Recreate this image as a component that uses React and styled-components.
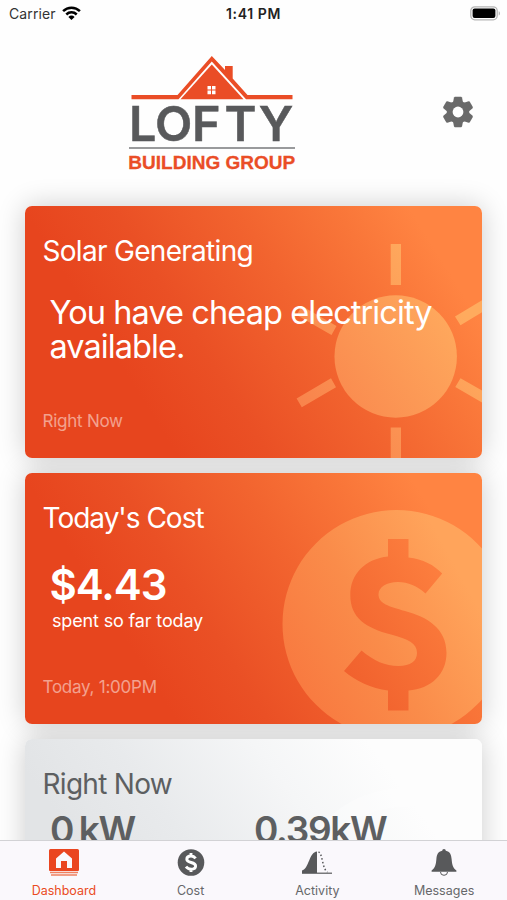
import React from 'react';
import styled, { createGlobalStyle } from 'styled-components';

const GlobalStyle = createGlobalStyle`
	* {
		box-sizing: border-box;
	}
	body {
		margin: 0;
		background: #fefefe;
		font-family: Inter, 'Liberation Sans', sans-serif;
	}
`;

const Screen = styled.div`
	width: 507px;
	height: 900px;
	overflow: hidden;
	display: flex;
	flex-direction: column;
`;

const StatusBar = styled.div`
	height: 28px;
	flex: none;
	display: grid;
	grid-template-columns: 1fr auto 1fr;
	align-items: center;
	padding: 0 6px 2px;
	color: #222;
`;

const Carrier = styled.div`
	display: flex;
	align-items: center;
	gap: 6px;
	padding-left: 3px;
	font-size: 14px;
	letter-spacing: 0.1px;
	color: #333;
`;

const Clock = styled.div`
	font-size: 14px;
	font-weight: 600;
	letter-spacing: 0.6px;
`;

const Battery = styled.div`
	justify-self: end;
	display: flex;
`;

const Header = styled.header`
	height: 178px;
	flex: none;
	display: flex;
	justify-content: space-between;
	padding: 26px 33px 0 125px;
`;

const SettingsButton = styled.button`
	width: 32px;
	height: 32px;
	margin-top: 42px;
	padding: 0;
	border: 0;
	background: none;
	display: flex;
`;

const CardList = styled.main`
	position: relative;
	z-index: 0;
	flex: 1;
	min-height: 0;
	display: flex;
	flex-direction: column;
	gap: 15px;
	padding: 0 25px;
`;

const Card = styled.section`
	position: relative;
	flex: none;
	height: 251.5px;
	border-radius: 7px;
	color: ${(props) => (props.$plain ? '#5d5f61' : '#fff')};

	&::before {
		content: '';
		position: absolute;
		inset: 0;
		z-index: -1;
		border-radius: 7px;
		box-shadow: 0 0 28px rgba(0, 0, 0, 0.2);
	}
`;

const CardBody = styled.div`
	position: relative;
	z-index: 0;
	height: 100%;
	padding: 28px 17px 0 17.5px;
	display: flex;
	flex-direction: column;
	border-radius: 7px;
	overflow: hidden;
	background: ${(props) =>
		props.$plain
			? 'linear-gradient(54deg, #e2e4e6 25%, #e8eaec 42%, #f5f6f7 64%, #fdfdfd 82%)'
			: 'linear-gradient(58deg, #e7451e 25%, #ea5025 40%, #f2642f 60%, #f97639 76%, #ff8442 88%)'};
`;

const CardArt = styled.svg`
	position: absolute;
	inset: 0;
	z-index: -1;
`;

const Title = styled.h2`
	margin: 0;
	font-size: 28px;
	line-height: 34px;
	font-weight: 400;
	letter-spacing: ${(props) => props.$tracking || '-0.7px'};
`;

const Message = styled.p`
	margin: 28px 0 0 7px;
	font-size: 32.5px;
	line-height: 34px;
	letter-spacing: -0.92px;
`;

const Amount = styled.p`
	margin: 27px 0 0 7px;
	font-size: 42px;
	line-height: 46px;
	font-weight: 600;
	letter-spacing: -1px;
`;

const Caption = styled.p`
	margin: 2px 0 0 9.5px;
	font-size: 18px;
	line-height: 22px;
	letter-spacing: -0.15px;
`;

const Stamp = styled.p`
	margin: auto 0 27px;
	font-size: 17px;
	line-height: 20px;
	letter-spacing: -0.25px;
	color: rgba(255, 255, 255, 0.5);
`;

const Readings = styled.div`
	display: grid;
	grid-template-columns: 204px auto;
	margin: 7px 0 0 7.5px;
	font-size: 37px;
	line-height: 44px;
	font-weight: 600;
	letter-spacing: -1.3px;
	word-spacing: -2.5px;
`;

const TabBar = styled.nav`
	position: relative;
	z-index: 1;
	flex: none;
	height: 60px;
	display: grid;
	grid-template-columns: repeat(4, 1fr);
	background: #faf8fc;
	border-top: 1px solid #d2d2d5;
`;

const Tab = styled.button`
	border: 0;
	padding: 7px 0 0 1px;
	background: none;
	display: flex;
	flex-direction: column;
	align-items: center;
	gap: 7px;
	font-family: inherit;
	font-size: 12.5px;
	line-height: 16px;
	letter-spacing: 0;
	color: ${(props) => (props.$active ? '#ea4b22' : '#66676a')};
`;

const WifiIcon = () => (
	<svg width="19" height="15" viewBox="0 0 19 15">
		<g fill="none" stroke="#000" strokeWidth="2.5">
			<path d="M1.1 5.2a12 12 0 0 1 16.8 0" />
			<path d="M4.3 8.5a7.4 7.4 0 0 1 10.4 0" />
		</g>
		<path d="M9.5 14 6.4 10.9a4.4 4.4 0 0 1 6.2 0z" />
	</svg>
);

const BatteryIcon = () => (
	<svg width="31" height="15" viewBox="0 0 31 15">
		<rect x="0.8" y="0.8" width="26.4" height="13" rx="4" fill="#fff" stroke="#b5b5b5" strokeWidth="1.3" />
		<rect x="2.6" y="2.6" width="22.8" height="9.4" rx="2" fill="#000" />
		<path d="M28.7 5.2v4.4c1.7-.6 1.7-3.8 0-4.4" fill="#b5b5b5" />
	</svg>
);

const Logo = () => (
	<svg width="175" height="120" viewBox="125 54 175 120">
		<g fill="#ea4d26">
			<path d="M131.5 95h46L211.8 56l13.2 14V66h7.7v12.5L247.5 95h45v4.2H246L211.8 61.5 178.5 99.2h-47z" />
			<path d="M211.8 64.5 243.5 99.2h-63z" />
		</g>
		<path d="M207.5 86h3.500v3.600h-3.500zM212 86h3.500v3.600H212zM207.500 90.600h3.500v3.600h-3.500zM212 90.600h3.500v3.600H212z" fill="#fff" />
		<text
			x="129 155 192 224.5 258.8"
			y="141.3"
			fontFamily="Inter"
			fontWeight="600"
			fontSize="48.5"
			fill="#58595b"
			stroke="#58595b"
			strokeWidth="0.5">
			LOFTY
		</text>
		<path d="M129 148h166" stroke="#77787b" strokeWidth="1.3" />
		<text x="128.3" y="169" fontFamily="Liberation Sans" fontWeight="700" fontSize="19" fill="#ea4d26" stroke="#ea4d26" strokeWidth="0.3" textLength="167">
			BUILDING GROUP
		</text>
	</svg>
);

const GearIcon = () => (
	<svg width="32" height="32" viewBox="-16 -16 32 32">
		<g fill="#6a6a6a">
			<circle r="11.2" />
			{[0, 60, 120].map((angle) => (
				<path
					key={angle}
					transform={`rotate(${angle})`}
					d="M-3.2-15.3h6.4l.8.7 1 5v19.2l-1 5-.8.7h-6.4l-.8-.7-1-5v-19.2l1-5z"
				/>
			))}
		</g>
		<circle r="5.4" fill="#fefefe" />
	</svg>
);

const SunArt = () => (
	<CardArt width="457" height="252" viewBox="0 0 457 252">
		<defs>
			<linearGradient id="sun" gradientUnits="userSpaceOnUse" x1="270" y1="220" x2="440" y2="110">
				<stop offset="0" stopColor="#f8804a" />
				<stop offset="1" stopColor="#ffab5e" />
			</linearGradient>
		</defs>
		<g fill="url(#sun)">
			<circle cx="370.7" cy="150.5" r="61.2" />
			<path d="M365.7 38H376v41h-10.300zM365.700 221.500H376V252h-10.300z" />
			<path d="M276.800 100 271.600 109 306.500 129 311.500 120zM271.600 192.500 276.800 201.200 311 181.300 306 172.200z" />
			<path d="M464.600 89.800 470 98.500 435.500 119.300 430 110.500zM430.300 181 435.500 172.200 470 192 465 201z" />
		</g>
	</CardArt>
);

const CoinArt = () => (
	<CardArt width="457" height="252" viewBox="0 0 457 252">
		<defs>
			<linearGradient id="coin" gradientUnits="userSpaceOnUse" x1="260" y1="210" x2="440" y2="110">
				<stop offset="0" stopColor="#f8783f" />
				<stop offset="0.5" stopColor="#fa8c4a" />
				<stop offset="1" stopColor="#ffa45b" />
			</linearGradient>
		</defs>
		<path
			fill="url(#coin)"
			fillRule="evenodd"
			d="M371.5 37a114 114 0 1 0 .01 0z
				M363 66h20.5v18.5C398 86 409 92 417.2 100.5L400.5 120.5C392 113 383 109 373 109 361.5 109 353.5 114 353.5 121.5 353.5 130.5 364 133.5 380 138 402 144 421.5 155 421.5 180 421.5 201 406 216 383.5 217.5V237.5H363V217.5C346 215.5 331 208 319 198L336.5 177.5C349 188 360 193 373.5 193 385.5 193 392 188 392 180 392 170 383 166 366 161.5 341 155 325.3 145 325.3 122 325.3 101 340 86 363 83.5z"
		/>
	</CardArt>
);

const GaugeArt = () => (
	<CardArt width="457" height="252" viewBox="0 0 457 252">
		<path d="M283 110C297 75 330 55 364 50L394 47V68C350 66 318 80 304 110z" fill="#fff" opacity="0.3" />
	</CardArt>
);

const DashboardIcon = () => (
	<svg width="32" height="28" viewBox="0 0 32 28">
		<path
			fill="#ea4520"
			fillRule="evenodd"
			d="M2.5 1h27A1.5 1.5 0 0 1 31 2.5V22a1 1 0 0 1-1 1H2a1 1 0 0 1-1-1V2.5A1.5 1.5 0 0 1 2.5 1zM16 3.500 8 10.500V20h5v-7h6v7h5v-9.500z"
		/>
		<path d="M2 24.500h28M3 27h26" stroke="#f0805f" strokeWidth="1.300" />
	</svg>
);

const CostIcon = () => (
	<svg width="28" height="28" viewBox="0 0 28 28">
		<circle cx="14" cy="14.5" r="13.3" fill="#58595b" />
		<path
			d="M18.6 10.3C17.5 8.800 16 8 14 8c-2.600 0-4.200 1.300-4.200 3.200 0 4.300 8.800 2.300 8.800 6.800 0 2-1.800 3.200-4.400 3.200-2.200 0-4-.9-5.200-2.500M14 5v3.500M14 20.700V24"
			fill="none"
			stroke="#fff"
			strokeWidth="2.9"
		/>
	</svg>
);

const ActivityIcon = () => (
	<svg width="32" height="28" viewBox="0 0 32 28">
		<path d="M1 25V22.5C8 21 8 4 16 3.5V25z" fill="#58595b" />
		<path d="M1 25.2h30" stroke="#58595b" strokeWidth="1.2" />
		<path d="M17.5 3.8C22 6 21 21 26.5 24" fill="none" stroke="#58595b" strokeWidth="1.5" strokeDasharray="1.5 2.2" />
	</svg>
);

const MessagesIcon = () => (
	<svg width="28" height="28" viewBox="0 0 28 28">
		<path d="M10.5 24a3.5 3.3 0 0 0 7 0" fill="none" stroke="#58595b" strokeWidth="1" />
		<path
			d="M14 1a1.8 1.8 0 0 1 1.8 1.8C20 3.5 21.3 7 21.6 11c.5 6 1.3 9 4.8 11.5v1.3H1.6v-1.3C5.1 20 5.9 17 6.4 11c.3-4 1.6-7.5 5.8-8.2A1.8 1.8 0 0 1 14 1z"
			fill="#58595b"
		/>
	</svg>
);

const tabs = [
	{ label: 'Dashboard', Icon: DashboardIcon, active: true },
	{ label: 'Cost', Icon: CostIcon },
	{ label: 'Activity', Icon: ActivityIcon },
	{ label: 'Messages', Icon: MessagesIcon },
];

function App() {
	return (
		<Screen>
			<GlobalStyle />
			<StatusBar>
				<Carrier>
					Carrier <WifiIcon />
				</Carrier>
				<Clock>1:41 PM</Clock>
				<Battery>
					<BatteryIcon />
				</Battery>
			</StatusBar>
			<Header>
				<Logo />
				<SettingsButton aria-label="Settings">
					<GearIcon />
				</SettingsButton>
			</Header>
			<CardList>
				<Card>
					<CardBody>
						<Title>Solar Generating</Title>
						<Message>You have cheap electricity available.</Message>
						<Stamp>Right Now</Stamp>
						<SunArt />
					</CardBody>
				</Card>
				<Card>
					<CardBody>
						<Title $tracking="-1px">Today's Cost</Title>
						<Amount>$4.43</Amount>
						<Caption>spent so far today</Caption>
						<Stamp>Today, 1:00PM</Stamp>
						<CoinArt />
					</CardBody>
				</Card>
				<Card $plain>
					<CardBody $plain>
						<Title>Right Now</Title>
						<Readings>
							<span>0 kW</span>
							<span>0.39kW</span>
						</Readings>
						<GaugeArt />
					</CardBody>
				</Card>
			</CardList>
			<TabBar>
				{tabs.map(({ label, Icon, active }) => (
					<Tab key={label} $active={active}>
						<Icon />
						{label}
					</Tab>
				))}
			</TabBar>
		</Screen>
	);
}

export default App;
